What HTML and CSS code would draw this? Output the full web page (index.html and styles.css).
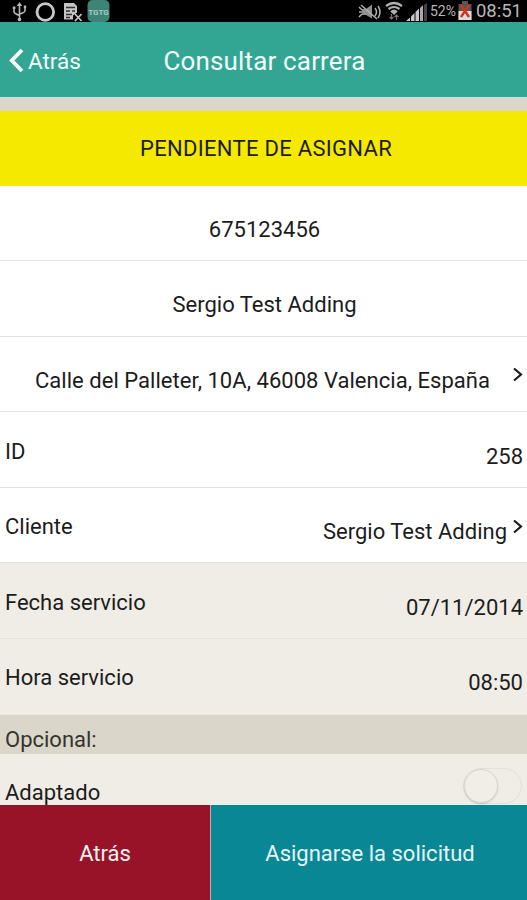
FILE: index.html
```html
<!DOCTYPE html>
<html lang="es">
<head>
  <meta charset="UTF-8" />
  <meta name="viewport" content="width=device-width, initial-scale=1.0" />
  <title>Consultar carrera</title>
  <link rel="stylesheet" href="styles.css">
</head>
<body>

  <!-- Status bar -->
  <div class="status-bar">
    <svg class="status-icons" width="112" height="22" viewBox="0 0 112 22" fill="none" stroke="#b8b8b8" stroke-width="1.6">
      <path d="M19.500 4v15M14 8v3.500q0 2 5.500 4M25 7.500v3q0 2-5.500 3.500" />
      <path d="M16.800 6l2.700-4 2.700 4zM12.800 6.500h2.600v2.600h-2.600zM23.800 5.500h2.400v2.400h-2.400z" fill="#b8b8b8" stroke="none" />
      <circle cx="19.500" cy="19.500" r="1.800" fill="#b8b8b8" stroke="none" />
      <circle cx="45.300" cy="12" r="8.300" stroke="#c8c8c8" stroke-width="2.800" />
      <path d="M64 3h10l3 3v6.500l-4 3v4H64z" fill="#c4c4c4" stroke="none" />
      <path d="M66 7.500h9M66 11h4M72 11h3M66 14.500h6M66 17.500h4" stroke="#333" stroke-width="1.300" />
      <path d="M75 14l6.500 7M81.500 14L75 21" stroke="#c4c4c4" stroke-width="1.700" />
      <rect x="87.500" y="0" width="22" height="22" rx="5" fill="#3d8477" stroke="none" />
      <text class="app-badge" x="98.500" y="15" text-anchor="middle">TGTG</text>
    </svg>
    <div class="status-right">
      <svg width="72" height="22" viewBox="0 0 72 22" fill="none" stroke="#b0b0b0">
        <path d="M4 9h4l6-4.500v14L8 15H4z" fill="#909090" stroke="none" />
        <path d="M1 7l3 3M1 12h3M1 17l3-3M3 5l16 14M17 8q3 4 0 8M20 6q4 6 0 12" stroke-width="1.500" />
        <path d="M28 6q8-6 16 0M30.500 9q5.500-4 11 0M33 12q3-2.500 6 0" stroke-width="2.200" />
        <path d="M36 15l-3-3h6z" fill="#b0b0b0" stroke="none" />
        <path d="M33.500 14v5M31.500 17l2 2 2-2M38.500 20v-5M36.500 17l2-2 2 2" stroke="#777" stroke-width="1.200" />
        <path d="M48 21l4-3.500V21zM53 21v-4.500l3.500-3.500v8zM57.500 21v-9L61 8.500V21z" fill="#c8c8c8" stroke="none" />
        <path d="M62 21V8l3-3v16z" fill="#aaa" stroke="none" />
        <path d="M66 21V5l3-2v18z" fill="#444" stroke="none" />
      </svg>
      <span class="percent">52%</span>
      <svg width="14" height="22" viewBox="0 0 14 22">
        <path d="M4 1h6v3h3.500v16H.5V4H4z" fill="#555" />
        <path d="M.5 11h13v9H.5z" fill="#ddd" />
        <path d="M3 5l8 12M11 5L3 17" stroke="#d0341d" stroke-width="2.400" />
      </svg>
      <span class="clock">08:51</span>
    </div>
  </div>

  <header class="header">
    <a class="back">
      <svg width="15" height="26" viewBox="0 0 15 26" fill="none" stroke="#fff" stroke-width="3.800">
        <path d="M13 2L2.800 12.500 13 23" />
      </svg>
      <span>Atrás</span>
    </a>
    <h1>Consultar carrera</h1>
  </header>

  <main>
    <div class="banner">PENDIENTE DE ASIGNAR</div>

    <div class="row centered"><span class="value">675123456</span></div>
    <div class="row centered"><span class="value">Sergio Test Adding</span></div>
    <div class="row address">
      <span class="value">Calle del Palleter, 10A, 46008 Valencia, España</span>
      <svg class="arrow" width="11" height="15" viewBox="0 0 11 15"><path d="M2 1.500l7 6-7 6" /></svg>
    </div>
    <div class="row">
      <span class="label">ID</span>
      <span class="value">258</span>
    </div>
    <div class="row">
      <span class="label">Cliente</span>
      <span class="value">Sergio Test Adding</span>
      <svg class="arrow" width="11" height="15" viewBox="0 0 11 15"><path d="M2 1.500l7 6-7 6" /></svg>
    </div>
    <div class="row shaded">
      <span class="label">Fecha servicio</span>
      <span class="value">07/11/2014</span>
    </div>
    <div class="row shaded last">
      <span class="label">Hora servicio</span>
      <span class="value">08:50</span>
    </div>

    <h2 class="section">Opcional:</h2>
    <div class="option">
      <span class="label">Adaptado</span>
      <div class="switch"><div class="knob"></div></div>
    </div>
  </main>

  <footer class="actions">
    <button class="btn-back">Atrás</button>
    <button class="btn-assign">Asignarse la solicitud</button>
  </footer>

</body>
</html>
```
FILE: styles.css
```css
* { box-sizing: border-box; margin: 0; padding: 0; }

body {
  font-family: Roboto, sans-serif;
  font-size: 22px;
  line-height: 26px;
  color: #1c1c1c;
  background: #f0ede6;
  height: 900px;
  display: flex;
  flex-direction: column;
  overflow: hidden;
}

svg { display: block; flex-shrink: 0; }

.status-bar {
  height: 22px;
  flex-shrink: 0;
  background: #000;
  display: flex;
  justify-content: space-between;
}

.app-badge {
  font-size: 8px;
  font-weight: 700;
  fill: #a9cbc3;
  stroke: none;
}

.status-right {
  display: flex;
  align-items: center;
  padding-right: 5px;
  color: #b8b8b8;
  line-height: 22px;
}

.percent {
  font-size: 14px;
  width: 28px;
  white-space: nowrap;
}

.clock {
  width: 50px;
  text-align: right;
  font-size: 18.5px;
  white-space: nowrap;
}

.header {
  height: 76px;
  flex-shrink: 0;
  background: #33a593;
  border-bottom: 1px solid #c9e3dc;
  color: #f2fffc;
  display: grid;
  grid-template-columns: 120px 1fr 118px;
  align-items: center;
  padding-top: 2px;
}

.back {
  display: flex;
  align-items: center;
  gap: 4px;
  padding-left: 9px;
  font-size: 22.5px;
}

.header h1 {
  font-size: 26px;
  font-weight: 400;
  letter-spacing: 0.15px;
  text-align: center;
  white-space: nowrap;
}

main {
  height: 707px;
  border-top: 13px solid #ddd7cb;
  overflow: hidden;
}

.banner {
  height: 74.5px;
  background: #f5e900;
  display: flex;
  align-items: center;
  justify-content: center;
  padding: 2px 0 0 5px;
  letter-spacing: 0.3px;
}

.row {
  height: 75.6px;
  background: #fff;
  border-bottom: 1px solid #e3e2de;
  display: flex;
  align-items: center;
  padding: 2px 4px 0 5px;
}

.row .label { padding-top: 2px; }

.row .value {
  margin-left: auto;
  padding-top: 12px;
  white-space: nowrap;
}

.centered .value {
  margin-right: auto;
  padding-left: 1px;
}

.address .value {
  margin-right: 17px;
  letter-spacing: 0.03px;
}

.arrow {
  fill: none;
  stroke: #1c1c1c;
  stroke-width: 2.2;
  margin-left: 5px;
}

.shaded { background: #f0ede6; }
.row.last { border-bottom-color: #ece9e0; }

.section {
  height: 39px;
  background: #dad6c9;
  color: #35342e;
  font-size: 22px;
  font-weight: 400;
  padding: 12px 5px 0;
}

.option {
  height: 76px;
  display: flex;
  justify-content: space-between;
  align-items: flex-start;
  padding: 14px 5px 0;
}

.option .label { padding-top: 12px; }

.switch {
  width: 59px;
  height: 36px;
  border: 1px solid #e3dfd9;
  border-radius: 18px;
}

.knob {
  width: 34px;
  height: 34px;
  border: 1px solid #dad6d1;
  border-radius: 50%;
  background: #f1eee8;
  box-shadow: 0 1px 2px rgba(0, 0, 0, 0.15);
}

.actions {
  height: 95px;
  flex-shrink: 0;
  display: grid;
  grid-template-columns: 211px 1fr;
}

.actions button {
  border: none;
  font: inherit;
  color: #f2f2f2;
  padding-top: 2px;
}

.actions .btn-back {
  background: #991328;
  border-right: 1px solid #c5a9a5;
}

.actions .btn-assign {
  background: #0a8795;
  color: #e2f8fb;
  padding-left: 2px;
}
```
